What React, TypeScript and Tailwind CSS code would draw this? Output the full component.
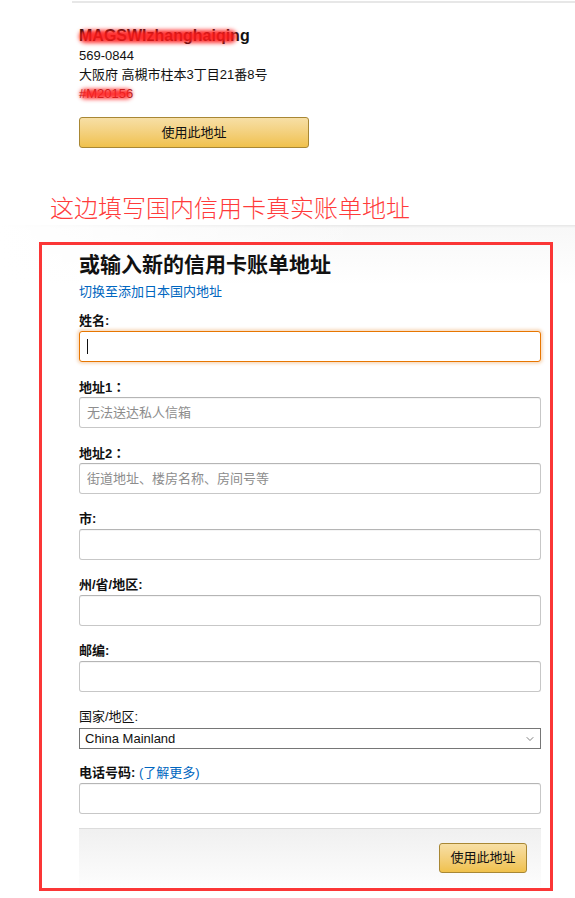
import { ChevronDown } from 'lucide-react';

const fields = [
  { label: '姓名:', placeholder: '', focused: true },
  { label: '地址1：', placeholder: '无法送达私人信箱' },
  { label: '地址2：', placeholder: '街道地址、楼房名称、房间号等' },
  { label: '市:', placeholder: '' },
  { label: '州/省/地区:', placeholder: '' },
  { label: '邮编:', placeholder: '' },
];

const YellowButton = ({ className = '' }: { className?: string }) => (
  <button
    className={`rounded-[3px] border border-[#a88734] bg-gradient-to-b from-[#f7dfa5] to-[#f0c14b] text-[13px] text-[#111] ${className}`}
  >
    使用此地址
  </button>
);

const Input = ({ placeholder = '', focused }: { placeholder?: string; focused?: boolean }) => (
  <div className="relative">
    <input
      placeholder={placeholder}
      className={`block h-[31px] w-full rounded-[3px] border bg-white px-[7px] text-[13px] caret-transparent outline-none placeholder:text-[#8d8d8d] ${
        focused
          ? 'border-[#e77600] shadow-[0_0_3px_2px_rgba(228,121,17,0.25)]'
          : 'border-[#c7c7c7] border-t-[#b5b5b5] shadow-[inset_0_1px_0_rgba(0,0,0,0.04)]'
      }`}
    />
    {focused && <span className="absolute left-[8px] top-[8px] h-[15px] w-px bg-[#111]" />}
  </div>
);

// full-width colon is centred in the JP font, as in the picture
const Label = ({ text }: { text: string }) =>
  text.endsWith('：') ? (
    <>
      {text.slice(0, -1)}
      <span className="inline-block font-['Noto_Sans_CJK_JP',sans-serif] leading-[19px]">：</span>
    </>
  ) : (
    <>{text}</>
  );

const TextField = ({ label, placeholder, focused }: { label: string; placeholder: string; focused?: boolean }) => (
  <div className="mb-[15px]">
    <label className="mb-[1px] block h-[19px] text-[13px] font-bold leading-[19px] text-[#111]">
      <Label text={label} />
    </label>
    <Input placeholder={placeholder} focused={focused} />
  </div>
);

export default function App() {
  return (
    <div className="min-h-[898px] w-[575px] bg-white font-['Liberation_Sans','Noto_Sans_CJK_SC',sans-serif] text-[#111]">
      {/* previous address */}
      <div className="ml-[72px] mt-px h-[2px] bg-[#e7e7e7]" />
      <div className="pl-[79px] pt-[23px]">
        <div className="relative w-fit text-[16px] font-bold leading-[20px]">
          MAGSWIzhanghaiqing
          <span className="absolute left-0 top-[4px] h-[13px] w-[158px] rounded-full bg-[#ff1a1a]/90 blur-[2px]" />
        </div>
        <div className="text-[13px] leading-[19px]">569-0844</div>
        <div className="text-[13px] leading-[19px]">大阪府 高槻市柱本3丁目21番8号</div>
        <div className="relative w-fit text-[13px] leading-[19px] text-[#8a1a1a]">
          #M20156
          <span className="absolute left-[1px] top-[5px] h-[10px] w-[52px] rounded-full bg-[#ff2020]/90 blur-[2px]" />
        </div>
        <YellowButton className="mt-[14px] block h-[31px] w-[230px]" />
      </div>

      <div className="mt-[45px] pl-[50px] text-[24px] font-light leading-[32px] text-[#ff3b3b]">
        这边填写国内信用卡真实账单地址
      </div>

      {/* new billing address */}
      <div className="bg-[linear-gradient(to_right,#fff,rgba(255,255,255,0)_65%),linear-gradient(to_bottom,#e6e6e6,#f8f8f8_3px,#fff_60px)] pt-[17px]">
        <div className="ml-[39px] w-[514px] border-[3px] border-[#fb3636] pb-[1px] pl-[37px] pr-[9px] pt-[6px]">
          <h1 className="mb-[3px] text-[21px] font-bold leading-[28px] text-[#111]">或输入新的信用卡账单地址</h1>
          <a className="block text-[13px] leading-[19px] text-[#0066c0]">切换至添加日本国内地址</a>

          <div className="mt-[10px]">
            {fields.map((f) => (
              <TextField key={f.label} label={f.label} placeholder={f.placeholder} focused={f.focused} />
            ))}

            <div className="mb-[14px]">
              <label className="mb-[2px] block text-[13px] leading-[19px] text-[#111]">国家/地区:</label>
              <div className="relative flex h-[21px] items-center border border-[#767676] bg-white pl-[5px] text-[13px] text-[#111]">
                China Mainland
                <ChevronDown className="absolute right-[4px] top-[4px] h-[12px] w-[12px] text-[#555]" strokeWidth={1.5} />
              </div>
            </div>

            <div className="mb-[14px]">
              <label className="mb-[1px] block text-[13px] leading-[19px] text-[#111]">
                <span className="font-bold">电话号码:</span> <span className="text-[#0066c0]">(了解更多)</span>
              </label>
              <Input />
            </div>
          </div>

          {/* footer */}
          <div className="flex h-[59px] items-center justify-end border-t border-[#dcdcdc] bg-gradient-to-b from-[#f0f0f0] to-[#fdfdfd] pr-[14px]">
            <YellowButton className="h-[30px] w-[88px]" />
          </div>
        </div>
      </div>
    </div>
  );
}
